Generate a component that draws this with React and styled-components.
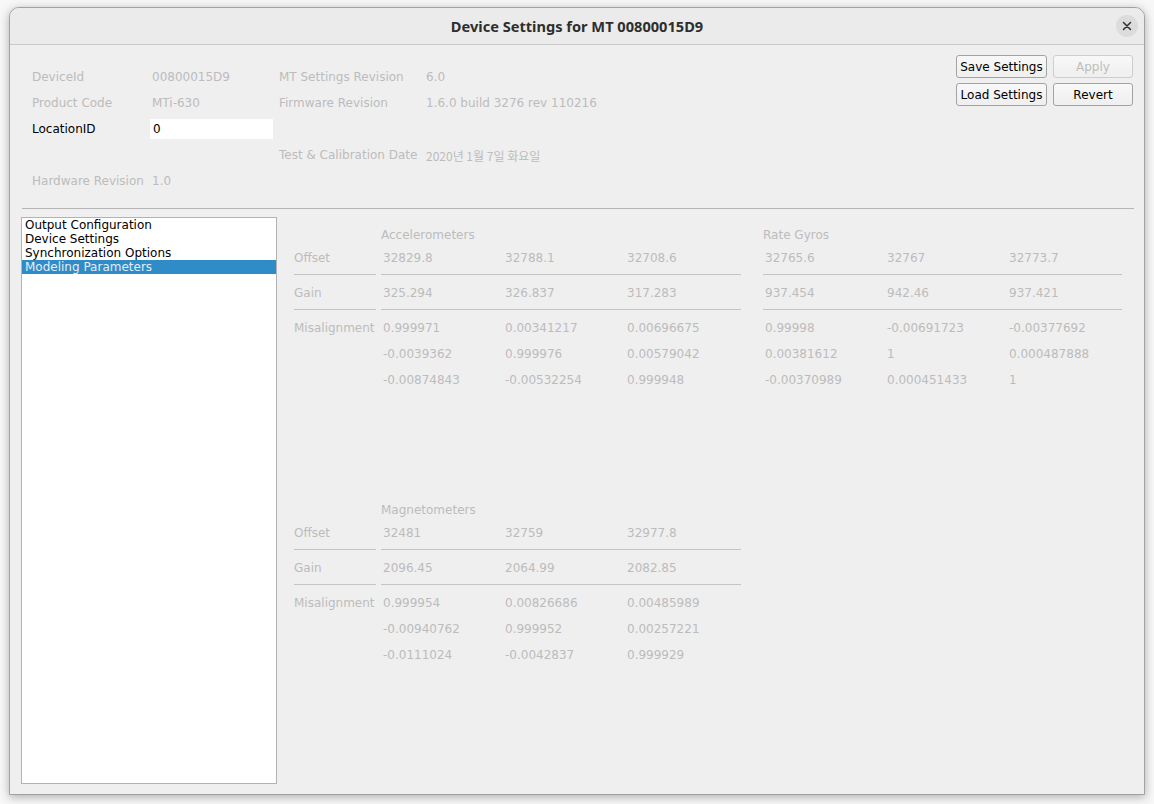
import React from "react";
import styled, { createGlobalStyle } from "styled-components";

const Global = createGlobalStyle`
  html, body { margin: 0; padding: 0; background: #f7f7f7; }
  body { font-family: "DejaVu Sans", sans-serif; font-size: 12px; }
  * { box-sizing: border-box; }
`;

const Page = styled.div`
  width: 1154px;
  height: 804px;
  padding: 7px 9px 0 9px;
  overflow: hidden;
`;

const Window = styled.div`
  width: 1136px;
  height: 788px;
  border: 1px solid #a2a2a2;
  border-radius: 10px 10px 0 0;
  background: #efefef;
  box-shadow: 0 2px 10px rgba(0, 0, 0, 0.3);
  display: flex;
  flex-direction: column;
  overflow: hidden;
`;

const TitleBar = styled.div`
  height: 37px;
  flex: none;
  background: #ebebeb;
  border-bottom: 1px solid #c9c9c9;
  display: grid;
  grid-template-columns: 1fr auto 1fr;
  align-items: center;
`;

const Title = styled.div`
  grid-column: 2;
  font-family: "Noto Sans", sans-serif;
  font-weight: 700;
  font-size: 14.6px;
  color: #2e2e2e;
`;

const CloseButton = styled.div`
  grid-column: 3;
  justify-self: end;
  margin-right: 6px;
  width: 22px;
  height: 22px;
  border-radius: 50%;
  background: #dcdcdc;
  display: flex;
  align-items: center;
  justify-content: center;
`;

const Body = styled.div`
  flex: 1;
  display: flex;
  flex-direction: column;
  padding: 10px 11px 10px 11px;
  min-height: 0;
`;

const TopSection = styled.div`
  height: 153px;
  flex: none;
  display: flex;
  justify-content: space-between;
  align-items: flex-start;
`;

const InfoGrid = styled.div`
  margin: 9px 0 0 11px;
  display: grid;
  grid-template-columns: 118px 129px 145px auto;
  grid-auto-rows: 26px;
  align-items: center;
`;

const Label = styled.div`
  color: ${(p) => (p.$active ? "#000" : "#bcbcbc")};
  white-space: nowrap;
`;

const Value = styled.div`
  padding-left: 2px;
  color: #bcbcbc;
  white-space: nowrap;
  font-family: ${(p) =>
    p.$cjk ? '"Noto Sans CJK KR", sans-serif' : '"DejaVu Sans", sans-serif'};
`;

const TextInput = styled.div`
  width: 123px;
  height: 20px;
  background: #fff;
  color: #000;
  padding-left: 3px;
  display: flex;
  align-items: center;
`;

const ButtonGrid = styled.div`
  display: grid;
  grid-template-columns: 91px 80px;
  column-gap: 6px;
  row-gap: 5px;
`;

const Button = styled.div`
  height: 23px;
  border: 1px solid ${(p) => (p.$disabled ? "#cdcdcd" : "#a3a3a3")};
  border-radius: 3px;
  background: linear-gradient(#f8f8f8, #efefef);
  color: ${(p) => (p.$disabled ? "#bdbdbd" : "#000")};
  display: flex;
  align-items: center;
  justify-content: center;
  white-space: nowrap;
`;

const Separator = styled.div`
  height: 1px;
  flex: none;
  margin: 0 -1px 0 1px;
  background: #b5b5b5;
`;

const BottomSection = styled.div`
  flex: 1;
  margin-top: 8px;
  display: flex;
  min-height: 0;
`;

const ListBox = styled.div`
  width: 256px;
  flex: none;
  background: #fff;
  border: 1px solid #b3b3b3;
`;

const ListItem = styled.div`
  height: 14px;
  line-height: 14px;
  padding-left: 3px;
  background: ${(p) => (p.$selected ? "#308cc6" : "transparent")};
  color: ${(p) => (p.$selected ? "#e4ecf6" : "#000")};
  white-space: nowrap;
`;

const ParamsPanel = styled.div`
  margin-left: 17px;
  padding-top: 8px;
  display: flex;
  flex-direction: column;
  gap: 107px;
`;

const Section = styled.div`
  display: flex;
  align-items: flex-start;
`;

const Column = styled.div`
  width: ${(p) => p.$w}px;
  margin-left: ${(p) => p.$ml || 0}px;
  flex: none;
  color: #bcbcbc;
`;

const HeaderRow = styled.div`
  height: 20px;
  display: flex;
  align-items: center;
  white-space: nowrap;
`;

const Row = styled.div`
  height: 26px;
  display: grid;
  grid-template-columns: 122px 122px 1fr;
  align-items: center;
  white-space: nowrap;
`;

const Cell = styled.div`
  padding-left: ${(p) => (p.$label ? 0 : 2)}px;
`;

const Divider = styled.div`
  height: 1px;
  margin: 3px 0 5px;
  background: #c4c4c4;
`;

function LabelColumn() {
  return (
    <Column $w={82}>
      <HeaderRow />
      <Row><Cell $label>Offset</Cell></Row>
      <Divider />
      <Row><Cell $label>Gain</Cell></Row>
      <Divider />
      <Row><Cell $label>Misalignment</Cell></Row>
      <Row />
      <Row />
    </Column>
  );
}

function Sensor({ title, data, width, ml }) {
  const rows = (vals) => (
    <Row>
      {vals.map((v, i) => (
        <Cell key={i}>{v}</Cell>
      ))}
    </Row>
  );
  return (
    <Column $w={width} $ml={ml}>
      <HeaderRow>{title}</HeaderRow>
      {rows(data.offset)}
      <Divider />
      {rows(data.gain)}
      <Divider />
      {data.mis.map((r, i) => (
        <React.Fragment key={i}>{rows(r)}</React.Fragment>
      ))}
    </Column>
  );
}

const accel = {
  offset: ["32829.8", "32788.1", "32708.6"],
  gain: ["325.294", "326.837", "317.283"],
  mis: [
    ["0.999971", "0.00341217", "0.00696675"],
    ["-0.0039362", "0.999976", "0.00579042"],
    ["-0.00874843", "-0.00532254", "0.999948"],
  ],
};

const gyro = {
  offset: ["32765.6", "32767", "32773.7"],
  gain: ["937.454", "942.46", "937.421"],
  mis: [
    ["0.99998", "-0.00691723", "-0.00377692"],
    ["0.00381612", "1", "0.000487888"],
    ["-0.00370989", "0.000451433", "1"],
  ],
};

const mag = {
  offset: ["32481", "32759", "32977.8"],
  gain: ["2096.45", "2064.99", "2082.85"],
  mis: [
    ["0.999954", "0.00826686", "0.00485989"],
    ["-0.00940762", "0.999952", "0.00257221"],
    ["-0.0111024", "-0.0042837", "0.999929"],
  ],
};

export default function App() {
  return (
    <>
      <Global />
      <Page>
        <Window>
          <TitleBar>
            <Title>Device Settings for MT 00800015D9</Title>
            <CloseButton>
              <svg width="10" height="10" viewBox="0 0 10 10">
                <path d="M1.5 1.5 L8.5 8.5 M8.5 1.5 L1.5 8.5" stroke="#2f2f2f" strokeWidth="1.5" strokeLinecap="round" />
              </svg>
            </CloseButton>
          </TitleBar>
          <Body>
            <TopSection>
              <InfoGrid>
                <Label>DeviceId</Label>
                <Value>00800015D9</Value>
                <Label>MT Settings Revision</Label>
                <Value>6.0</Value>

                <Label>Product Code</Label>
                <Value>MTi-630</Value>
                <Label>Firmware Revision</Label>
                <Value>1.6.0 build 3276 rev 110216</Value>

                <Label $active>LocationID</Label>
                <TextInput>0</TextInput>
                <div />
                <div />

                <div />
                <div />
                <Label>Test &amp; Calibration Date</Label>
                <Value $cjk>2020년 1월 7일 화요일</Value>

                <Label>Hardware Revision</Label>
                <Value>1.0</Value>
                <div />
                <div />
              </InfoGrid>
              <ButtonGrid>
                <Button>Save Settings</Button>
                <Button $disabled>Apply</Button>
                <Button>Load Settings</Button>
                <Button>Revert</Button>
              </ButtonGrid>
            </TopSection>
            <Separator />
            <BottomSection>
              <ListBox>
                <ListItem>Output Configuration</ListItem>
                <ListItem>Device Settings</ListItem>
                <ListItem>Synchronization Options</ListItem>
                <ListItem $selected>Modeling Parameters</ListItem>
              </ListBox>
              <ParamsPanel>
                <Section>
                  <LabelColumn />
                  <Sensor title="Accelerometers" data={accel} width={360} ml={5} />
                  <Sensor title="Rate Gyros" data={gyro} width={359} ml={22} />
                </Section>
                <Section>
                  <LabelColumn />
                  <Sensor title="Magnetometers" data={mag} width={360} ml={5} />
                </Section>
              </ParamsPanel>
            </BottomSection>
          </Body>
        </Window>
      </Page>
    </>
  );
}
